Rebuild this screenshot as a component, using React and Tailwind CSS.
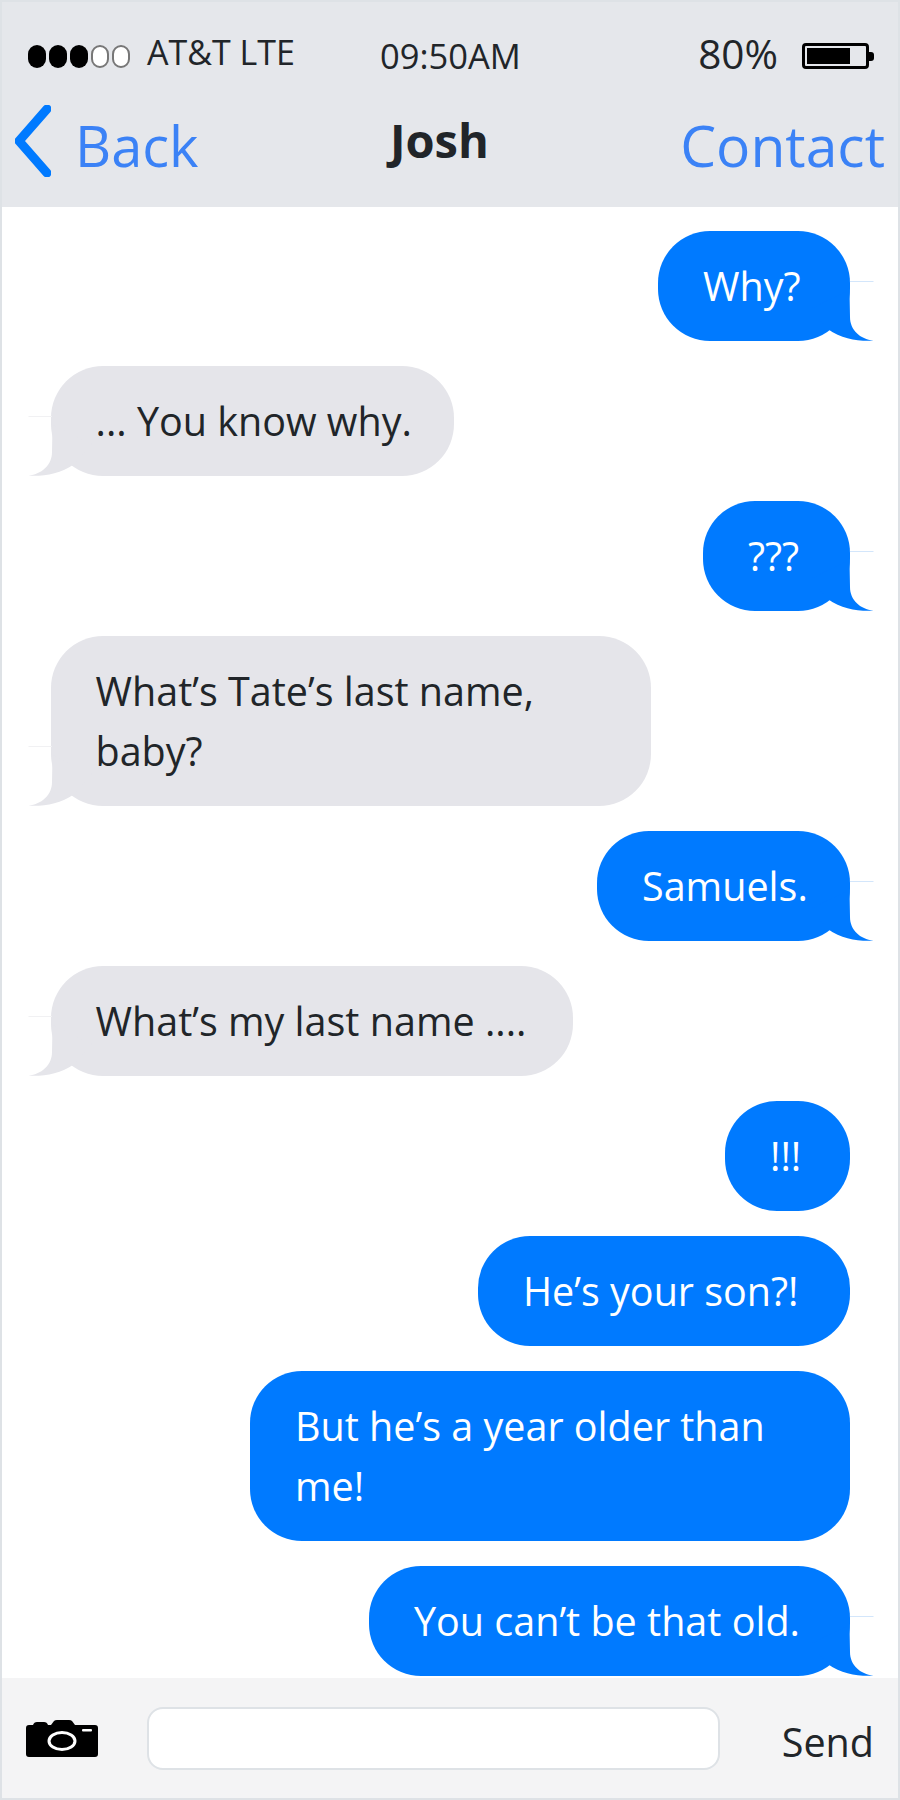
import React from 'react';

const Tail = ({ mine }) => (
  <svg
    viewBox="0 0 74 62"
    className={mine ? 'absolute right-[-24px] bottom-0 h-[62px] w-[74px]' : 'absolute left-[-23px] bottom-0 h-[62px] w-[74px] -scale-x-100'}
  >
    <path d="M49.5 11 L50 38 C50 51 60 60 73.5 61.7 C58 62.5 42 60 28 50.3 L10 30 Z" fill={mine ? '#007aff' : '#e5e5ea'} />
    <line x1="50" y1="2.5" x2="73.5" y2="2.5" stroke={mine ? '#d3e6fb' : '#f1f1f3'} strokeWidth="1" />
  </svg>
);

const Bubble = ({ mine, tail = true, width, children }) => (
  <div className={mine ? 'flex justify-end pr-[48px]' : 'flex justify-start pl-[48.5px]'}>
    <div className={`relative shrink-0 rounded-[52px] py-[25px] pl-[45px] pr-[30px] text-[39.5px] leading-[60px] ${width} ${mine ? 'bg-[#007aff] text-white' : 'bg-[#e5e5ea] text-[#212529]'}`}>
      {tail && <Tail mine={mine} />}
      <div className="relative">{children}</div>
    </div>
  </div>
);

const Signal = () => (
  <div className="flex gap-[3px] blur-[0.5px]">
    <div className="h-[23px] w-[18px] rounded-full bg-black"></div>
    <div className="h-[23px] w-[18px] rounded-full bg-black"></div>
    <div className="h-[23px] w-[18px] rounded-full bg-black"></div>
    <div className="h-[23px] w-[18px] rounded-full border-2 border-[#777] bg-white"></div>
    <div className="h-[23px] w-[18px] rounded-full border-2 border-[#777] bg-white"></div>
  </div>
);

const Battery = () => (
  <div className="flex items-center">
    <div className="h-[26px] w-[67px] rounded-[4px] border-[3px] border-black p-[2px] pr-[16px]">
      <div className="h-full bg-black"></div>
    </div>
    <div className="h-[9px] w-[5px] rounded-r-[3px] bg-black"></div>
  </div>
);

const Camera = () => (
  <svg viewBox="0 0 72 37" className="h-[37px] w-[72px]">
    <path
      d="M3 5 H7 Q8 2 11 2 H18 Q21 2 22 5 H25 L28 1 Q29 0 31 0 H43 Q45 0 46 1 L49 5 H69 Q72 5 72 8 V34 Q72 37 69 37 H3 Q0 37 0 34 V8 Q0 5 3 5 Z"
      fill="#000"
    />
    <ellipse cx="36" cy="21" rx="13" ry="8.5" fill="none" stroke="#fff" strokeWidth="3" />
    <rect x="56" y="9" width="10" height="2.5" rx="1" fill="#fff" />
  </svg>
);

export default function App() {
  return (
    <div className="flex h-[1800px] w-[900px] flex-col overflow-hidden border-2 border-[#dee2e6] bg-white font-['Open_Sans',sans-serif] text-[#212529]">
      <div className="h-[205px] shrink-0 bg-[#e5e7eb]">
        <div className="flex h-[103px] items-center pt-[5px] pr-[24px] pl-[26px]">
          <div className="flex w-[352px] items-center gap-[17px]">
            <Signal />
            <span className="mb-[8px] text-[34px] leading-none">AT&amp;T LTE</span>
          </div>
          <span className="flex-1 text-[34.5px] leading-none">09:50AM</span>
          <span className="mb-[4px] text-[40.5px] leading-none">80%</span>
          <div className="ml-[24px]">
            <Battery />
          </div>
        </div>
        <div className="flex items-center justify-between px-[13px]">
          <div className="flex items-center gap-[24px]">
            <svg viewBox="0 0 36 72" className="mb-[4px] h-[72px] w-[36px]">
              <path d="M32 4 L4 36 L32 68" fill="none" stroke="#007aff" strokeWidth="9" strokeLinecap="round" strokeLinejoin="miter" />
            </svg>
            <span className="mt-[4px] text-[56px] leading-none text-[#3b82f6]">Back</span>
          </div>
          <span className="mb-[6px] text-[47px] leading-none font-bold">Josh</span>
          <span className="mt-[4px] text-[57px] leading-none text-[#3b82f6]">Contact</span>
        </div>
      </div>
      <div className="flex min-h-0 flex-1 flex-col gap-[25px] overflow-hidden pt-[24px]">
        <Bubble mine width="w-[192px]">Why?</Bubble>
        <Bubble width="w-[403px]">... You know why.</Bubble>
        <Bubble mine width="w-[147px]">???</Bubble>
        <Bubble width="w-[600px]">What’s Tate’s last name, baby?</Bubble>
        <Bubble mine width="w-[253px]">Samuels.</Bubble>
        <Bubble width="w-[522px]">What’s my last name ....</Bubble>
        <Bubble mine tail={false} width="w-[125px]">!!!</Bubble>
        <Bubble mine tail={false} width="w-[372px]">He’s your son?!</Bubble>
        <Bubble mine tail={false} width="w-[600px]">But he’s a year older than me!</Bubble>
        <Bubble mine width="w-[481px]">You can’t be that old.</Bubble>
      </div>
      <div className="flex h-[120px] shrink-0 items-center bg-[#f4f4f5] px-[24px]">
        <Camera />
        <div className="mr-[62px] ml-[49px] h-[63px] flex-1 rounded-[16px] border-2 border-[#dee2e6] bg-white"></div>
        <span className="mt-[10px] text-[39.5px] leading-none">Send</span>
      </div>
    </div>
  );
}
